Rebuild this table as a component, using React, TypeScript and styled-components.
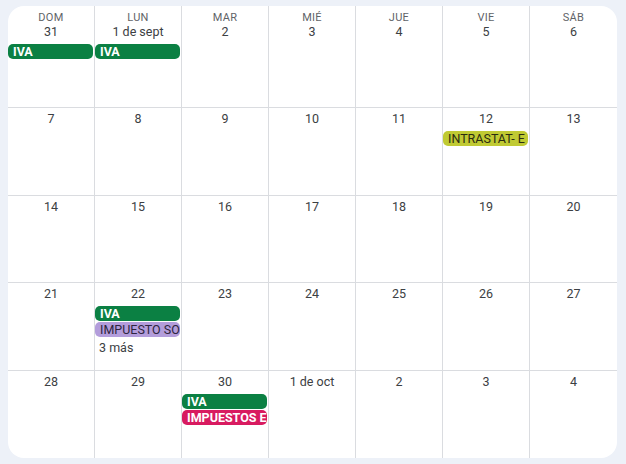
import React from "react";
import styled, { createGlobalStyle } from "styled-components";

const Global = createGlobalStyle`
  html, body { margin: 0; padding: 0; background: #edf1f8; }
  body { font-family: Roboto, "Noto Sans", Arial, sans-serif; }
  * { box-sizing: border-box; }
`;

const Page = styled.div`
  padding: 6px 9px 6px 8px;
`;

const Card = styled.div`
  background: #ffffff;
  border-radius: 16px;
  overflow: hidden;
  height: 452px;
  display: grid;
  grid-template-columns: repeat(7, 1fr);
  grid-template-rows: 102px repeat(4, 1fr);
`;

const Cell = styled.div<{ $lastCol: boolean; $lastRow: boolean; $first: boolean }>`
  display: flex;
  flex-direction: column;
  align-items: stretch;
  min-width: 0;
  border-right: ${(p) => (p.$lastCol ? "none" : "1px solid #dadce0")};
  border-bottom: ${(p) => (p.$lastRow ? "none" : "1px solid #dadce0")};
  padding-top: ${(p) => (p.$first ? "5px" : "4px")};
`;

const Weekday = styled.div`
  font-size: 11px;
  font-weight: 400;
  line-height: 14px;
  color: #5f6368;
  text-align: center;
  letter-spacing: 0.3px;
`;

const DayNum = styled.div`
  font-size: 12.5px;
  line-height: 14px;
  color: #3c4043;
  text-align: center;
  margin-bottom: 5px;
`;

const Chip = styled.div<{ $bg: string; $fg: string; $bold: boolean }>`
  height: 15px;
  margin: 0 1px 1px 0;
  border-radius: 5px;
  background: ${(p) => p.$bg};
  color: ${(p) => p.$fg};
  font-size: 12.5px;
  font-weight: ${(p) => (p.$bold ? 700 : 400)};
  line-height: 15px;
  padding-left: 5px;
  white-space: nowrap;
  overflow: hidden;
`;

const More = styled.div`
  font-size: 12.5px;
  line-height: 14px;
  color: #3c4043;
  padding-left: 4px;
  margin-top: 3px;
`;

type Ev = { label: string; bg: string; fg: string; bold: boolean };

const IVA: Ev = { label: "IVA", bg: "#0b8043", fg: "#ffffff", bold: true };
const INTRA: Ev = { label: "INTRASTAT- E", bg: "#c0ca33", fg: "#2a2c10", bold: false };
const IMPSO: Ev = { label: "IMPUESTO SO", bg: "#b39ddb", fg: "#2e2540", bold: false };
const IMPE: Ev = { label: "IMPUESTOS E", bg: "#d81b60", fg: "#ffffff", bold: true };

type Day = { n: string; events?: Ev[]; more?: string };

const weekdays = ["DOM", "LUN", "MAR", "MIÉ", "JUE", "VIE", "SÁB"];

const weeks: Day[][] = [
  [
    { n: "31", events: [IVA] },
    { n: "1 de sept", events: [IVA] },
    { n: "2" },
    { n: "3" },
    { n: "4" },
    { n: "5" },
    { n: "6" },
  ],
  [
    { n: "7" },
    { n: "8" },
    { n: "9" },
    { n: "10" },
    { n: "11" },
    { n: "12", events: [INTRA] },
    { n: "13" },
  ],
  [
    { n: "14" },
    { n: "15" },
    { n: "16" },
    { n: "17" },
    { n: "18" },
    { n: "19" },
    { n: "20" },
  ],
  [
    { n: "21" },
    { n: "22", events: [IVA, IMPSO], more: "3 más" },
    { n: "23" },
    { n: "24" },
    { n: "25" },
    { n: "26" },
    { n: "27" },
  ],
  [
    { n: "28" },
    { n: "29" },
    { n: "30", events: [IVA, IMPE] },
    { n: "1 de oct" },
    { n: "2" },
    { n: "3" },
    { n: "4" },
  ],
];

export default function App() {
  return (
    <>
      <Global />
      <Page>
        <Card>
          {weeks.map((week, wi) =>
            week.map((d, di) => (
              <Cell
                key={`${wi}-${di}`}
                $first={wi === 0}
                $lastCol={di === 6}
                $lastRow={wi === weeks.length - 1}
              >
                {wi === 0 && <Weekday>{weekdays[di]}</Weekday>}
                <DayNum>{d.n}</DayNum>
                {d.events?.map((e, ei) => (
                  <Chip key={ei} $bg={e.bg} $fg={e.fg} $bold={e.bold}>
                    {e.label}
                  </Chip>
                ))}
                {d.more && <More>{d.more}</More>}
              </Cell>
            ))
          )}
        </Card>
      </Page>
    </>
  );
}
